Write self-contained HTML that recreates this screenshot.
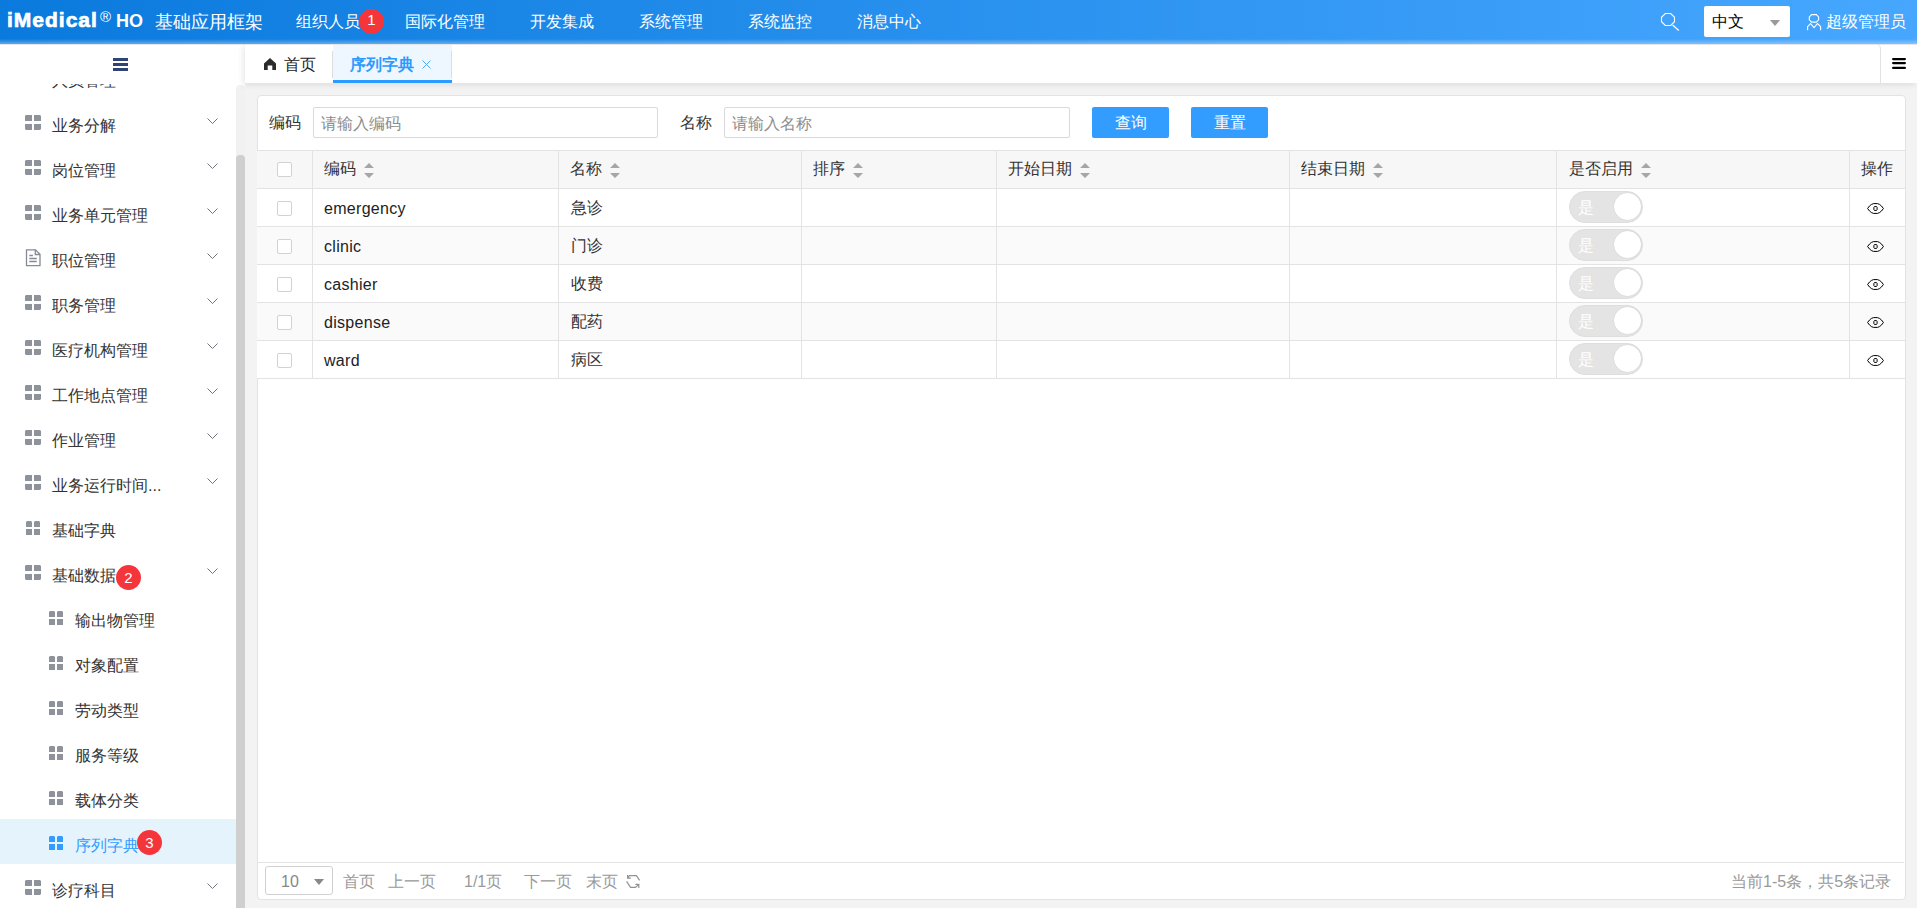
<!DOCTYPE html>
<html><head><meta charset="utf-8">
<style>
*{box-sizing:border-box}
html,body{margin:0;padding:0}
body{width:1917px;height:908px;overflow:hidden;position:relative;background:#f3f3f3;font-family:"Liberation Sans",sans-serif;color:#222}
.abs{position:absolute}
#hdr{left:0;top:0;width:1917px;height:44px;background:linear-gradient(90deg,#0a7add 0%,#47a7ff 100%);color:#fff}
#hdr .nav{position:absolute;top:12px;font-size:16px;line-height:20px;white-space:nowrap}
.badge{position:absolute;width:25px;height:25px;border-radius:50%;background:#f4363b;color:#fff;font-size:15px;line-height:25px;text-align:center}
#side{left:0;top:44px;width:245px;height:864px;background:#fff}
#menu{left:0;top:84px;width:236px;height:824px;overflow:hidden}
.mi{position:absolute;left:0;width:236px;height:45px}
.mi.sel{background:#e5f3fd}
.mi.sel .t{color:#339cff}
.mi .t{position:absolute;left:52px;top:17px;font-size:16px;line-height:20px;white-space:nowrap;color:#333}
.mi.sub .t{left:75px}
.mi svg.g{position:absolute;left:25px;top:16px}
.mi.sub svg.g{left:49px;top:17px}
.mi svg.ch{position:absolute;left:207px;top:19px}
#sb{left:236px;top:85px;width:9px;height:823px;background:#f1f1f1;border-radius:4px 4px 0 0}
#thumb{left:236px;top:155px;width:9px;height:753px;background:#cfcfcf;border-radius:4px 4px 0 0}
#tabs{left:245px;top:44px;width:1672px;height:39px;background:#fff;box-shadow:-2px 2px 6px rgba(0,0,0,.09)}
.tt{font-size:16px;line-height:20px;white-space:nowrap}
#panel{left:257px;top:95px;width:1649px;height:805px;background:#fff;border:1px solid #e3e3e3;border-radius:4px}
</style></head><body>
<div id="hdr" class="abs">
  <div class="abs" style="left:7px;top:6px;font-size:21px;font-weight:bold;line-height:28px;letter-spacing:1px;-webkit-text-stroke:0.7px #fff">iMedical</div>
  <div class="abs" style="left:100px;top:9px;font-size:15px;line-height:16px">&#174;</div>
  <div class="abs" style="left:116px;top:9px;font-size:18px;font-weight:bold;line-height:24px">HO</div>
  <div class="nav" style="left:155px;top:10px;font-size:18px;line-height:24px">基础应用框架</div>
  <div class="nav" style="left:296px">组织人员</div>
  <div class="badge" style="left:359px;top:9px;line-height:21px">1</div>
  <div class="nav" style="left:405px">国际化管理</div>
  <div class="nav" style="left:530px">开发集成</div>
  <div class="nav" style="left:639px">系统管理</div>
  <div class="nav" style="left:748px">系统监控</div>
  <div class="nav" style="left:857px">消息中心</div>
  <svg class="abs" style="left:1660px;top:12px" width="20" height="19" viewBox="0 0 20 19"><path d="M5.3 1.5H10.7L14.5 5.3V9.7L10.7 13.5H5.3L1.5 9.7V5.3z" fill="none" stroke="#fff" stroke-width="1.1"/><path d="M12.6 13L18.8 18.5" stroke="#fff" stroke-width="1.2"/></svg>
  <div class="abs" style="left:1704px;top:6px;width:86px;height:31px;background:#fff;border-radius:2px"></div>
  <div class="nav" style="left:1712px;top:12px;color:#000">中文</div>
  <svg class="abs" style="left:1770px;top:20px" width="10" height="6" viewBox="0 0 10 6"><path d="M0 0H10L5 6z" fill="#999"/></svg>
  <svg class="abs" style="left:1806px;top:14px" width="16" height="17" viewBox="0 0 16 17"><g fill="none" stroke="#fff" stroke-width="1.1"><path d="M5.6 0.6H10.3L12.6 2.9V5.8L10.3 8.1H5.6L3.3 5.8V2.9z"/><path d="M1.6 16.2V12.6L4.5 9.5L8 13.6L11.5 9.5L14.6 12.6V16.2"/></g></svg>
  <div class="nav" style="left:1826px">超级管理员</div>
</div>
<div class="abs" style="left:0;top:39px;width:1917px;height:5px;background:linear-gradient(180deg,rgba(255,255,255,0),rgba(255,255,255,.35));z-index:5"></div>
<div class="abs" style="left:0;top:44px;width:1917px;height:1px;background:rgba(0,0,0,.1);z-index:5"></div>
<div id="side" class="abs">
  <svg class="abs" style="left:113px;top:14px" width="15" height="13" viewBox="0 0 15 13"><g fill="#2f4476"><rect x="0" y="0" width="15" height="3"/><rect x="0" y="5" width="15" height="3"/><rect x="0" y="10" width="15" height="3"/></g></svg>
</div>
<div id="menu" class="abs">
<div class="mi" style="top:-30px"><div class="t">人员管理</div><svg class="ch" width="11" height="7" viewBox="0 0 11 7"><path d="M0.5 0.5L5.5 5.5L10.5 0.5" fill="none" stroke="#70747c" stroke-width="1"/></svg></div>
<div class="mi" style="top:15px"><svg class="g" width="16" height="15" viewBox="0 0 16 15"><g fill="#8e929b"><path d="M1 0h6v6H0V1z"/><path d="M9 0h6l1 1v5H9z"/><path d="M0 9h7v6H1l-1-1z"/><path d="M9 9h7v5l-1 1H9z"/></g></svg><div class="t">业务分解</div><svg class="ch" width="11" height="7" viewBox="0 0 11 7"><path d="M0.5 0.5L5.5 5.5L10.5 0.5" fill="none" stroke="#70747c" stroke-width="1"/></svg></div>
<div class="mi" style="top:60px"><svg class="g" width="16" height="15" viewBox="0 0 16 15"><g fill="#8e929b"><path d="M1 0h6v6H0V1z"/><path d="M9 0h6l1 1v5H9z"/><path d="M0 9h7v6H1l-1-1z"/><path d="M9 9h7v5l-1 1H9z"/></g></svg><div class="t">岗位管理</div><svg class="ch" width="11" height="7" viewBox="0 0 11 7"><path d="M0.5 0.5L5.5 5.5L10.5 0.5" fill="none" stroke="#70747c" stroke-width="1"/></svg></div>
<div class="mi" style="top:105px"><svg class="g" width="16" height="15" viewBox="0 0 16 15"><g fill="#8e929b"><path d="M1 0h6v6H0V1z"/><path d="M9 0h6l1 1v5H9z"/><path d="M0 9h7v6H1l-1-1z"/><path d="M9 9h7v5l-1 1H9z"/></g></svg><div class="t">业务单元管理</div><svg class="ch" width="11" height="7" viewBox="0 0 11 7"><path d="M0.5 0.5L5.5 5.5L10.5 0.5" fill="none" stroke="#70747c" stroke-width="1"/></svg></div>
<div class="mi" style="top:150px"><svg class="g" width="17" height="18" viewBox="0 0 17 18" style="top:15px"><g fill="none" stroke="#858a94" stroke-width="1.3"><path d="M1.5 0.8h9l4.5 4.5v11.4h-13.5z"/><path d="M10.3 0.8v4.7h4.7"/><path d="M4.3 6.5h3.6M4.3 9.5h7.5M4.3 12.5h7.5"/></g></svg><div class="t">职位管理</div><svg class="ch" width="11" height="7" viewBox="0 0 11 7"><path d="M0.5 0.5L5.5 5.5L10.5 0.5" fill="none" stroke="#70747c" stroke-width="1"/></svg></div>
<div class="mi" style="top:195px"><svg class="g" width="16" height="15" viewBox="0 0 16 15"><g fill="#8e929b"><path d="M1 0h6v6H0V1z"/><path d="M9 0h6l1 1v5H9z"/><path d="M0 9h7v6H1l-1-1z"/><path d="M9 9h7v5l-1 1H9z"/></g></svg><div class="t">职务管理</div><svg class="ch" width="11" height="7" viewBox="0 0 11 7"><path d="M0.5 0.5L5.5 5.5L10.5 0.5" fill="none" stroke="#70747c" stroke-width="1"/></svg></div>
<div class="mi" style="top:240px"><svg class="g" width="16" height="15" viewBox="0 0 16 15"><g fill="#8e929b"><path d="M1 0h6v6H0V1z"/><path d="M9 0h6l1 1v5H9z"/><path d="M0 9h7v6H1l-1-1z"/><path d="M9 9h7v5l-1 1H9z"/></g></svg><div class="t">医疗机构管理</div><svg class="ch" width="11" height="7" viewBox="0 0 11 7"><path d="M0.5 0.5L5.5 5.5L10.5 0.5" fill="none" stroke="#70747c" stroke-width="1"/></svg></div>
<div class="mi" style="top:285px"><svg class="g" width="16" height="15" viewBox="0 0 16 15"><g fill="#8e929b"><path d="M1 0h6v6H0V1z"/><path d="M9 0h6l1 1v5H9z"/><path d="M0 9h7v6H1l-1-1z"/><path d="M9 9h7v5l-1 1H9z"/></g></svg><div class="t">工作地点管理</div><svg class="ch" width="11" height="7" viewBox="0 0 11 7"><path d="M0.5 0.5L5.5 5.5L10.5 0.5" fill="none" stroke="#70747c" stroke-width="1"/></svg></div>
<div class="mi" style="top:330px"><svg class="g" width="16" height="15" viewBox="0 0 16 15"><g fill="#8e929b"><path d="M1 0h6v6H0V1z"/><path d="M9 0h6l1 1v5H9z"/><path d="M0 9h7v6H1l-1-1z"/><path d="M9 9h7v5l-1 1H9z"/></g></svg><div class="t">作业管理</div><svg class="ch" width="11" height="7" viewBox="0 0 11 7"><path d="M0.5 0.5L5.5 5.5L10.5 0.5" fill="none" stroke="#70747c" stroke-width="1"/></svg></div>
<div class="mi" style="top:375px"><svg class="g" width="16" height="15" viewBox="0 0 16 15"><g fill="#8e929b"><path d="M1 0h6v6H0V1z"/><path d="M9 0h6l1 1v5H9z"/><path d="M0 9h7v6H1l-1-1z"/><path d="M9 9h7v5l-1 1H9z"/></g></svg><div class="t">业务运行时间...</div><svg class="ch" width="11" height="7" viewBox="0 0 11 7"><path d="M0.5 0.5L5.5 5.5L10.5 0.5" fill="none" stroke="#70747c" stroke-width="1"/></svg></div>
<div class="mi" style="top:420px"><svg class="g" style="left:26px;top:17px" width="14" height="14" viewBox="0 0 14 14"><g fill="#8e929b"><path d="M1 0h4l1 1v5H0V1z"/><path d="M9 0h4l1 1v5H8V1z"/><path d="M0 8h6v6H0z"/><path d="M8 8h6v6H8z"/></g></svg><div class="t">基础字典</div></div>
<div class="mi" style="top:465px"><svg class="g" width="16" height="15" viewBox="0 0 16 15"><g fill="#8e929b"><path d="M1 0h6v6H0V1z"/><path d="M9 0h6l1 1v5H9z"/><path d="M0 9h7v6H1l-1-1z"/><path d="M9 9h7v5l-1 1H9z"/></g></svg><div class="t">基础数据</div><svg class="ch" width="11" height="7" viewBox="0 0 11 7"><path d="M0.5 0.5L5.5 5.5L10.5 0.5" fill="none" stroke="#70747c" stroke-width="1"/></svg><div class="badge" style="left:116px;top:16px">2</div></div>
<div class="mi sub" style="top:510px"><svg class="g" width="14" height="14" viewBox="0 0 14 14"><g fill="#8e929b"><path d="M1 0h4l1 1v5H0V1z"/><path d="M9 0h4l1 1v5H8V1z"/><path d="M0 8h6v6H0z"/><path d="M8 8h6v6H8z"/></g></svg><div class="t">输出物管理</div></div>
<div class="mi sub" style="top:555px"><svg class="g" width="14" height="14" viewBox="0 0 14 14"><g fill="#8e929b"><path d="M1 0h4l1 1v5H0V1z"/><path d="M9 0h4l1 1v5H8V1z"/><path d="M0 8h6v6H0z"/><path d="M8 8h6v6H8z"/></g></svg><div class="t">对象配置</div></div>
<div class="mi sub" style="top:600px"><svg class="g" width="14" height="14" viewBox="0 0 14 14"><g fill="#8e929b"><path d="M1 0h4l1 1v5H0V1z"/><path d="M9 0h4l1 1v5H8V1z"/><path d="M0 8h6v6H0z"/><path d="M8 8h6v6H8z"/></g></svg><div class="t">劳动类型</div></div>
<div class="mi sub" style="top:645px"><svg class="g" width="14" height="14" viewBox="0 0 14 14"><g fill="#8e929b"><path d="M1 0h4l1 1v5H0V1z"/><path d="M9 0h4l1 1v5H8V1z"/><path d="M0 8h6v6H0z"/><path d="M8 8h6v6H8z"/></g></svg><div class="t">服务等级</div></div>
<div class="mi sub" style="top:690px"><svg class="g" width="14" height="14" viewBox="0 0 14 14"><g fill="#8e929b"><path d="M1 0h4l1 1v5H0V1z"/><path d="M9 0h4l1 1v5H8V1z"/><path d="M0 8h6v6H0z"/><path d="M8 8h6v6H8z"/></g></svg><div class="t">载体分类</div></div>
<div class="mi sub sel" style="top:735px"><svg class="g" width="14" height="14" viewBox="0 0 14 14"><g fill="#339cff"><path d="M1 0h4l1 1v5H0V1z"/><path d="M9 0h4l1 1v5H8V1z"/><path d="M0 8h6v6H0z"/><path d="M8 8h6v6H8z"/></g></svg><div class="t">序列字典</div><div class="badge" style="left:137px;top:11px">3</div></div>
<div class="mi" style="top:780px"><svg class="g" width="16" height="15" viewBox="0 0 16 15"><g fill="#8e929b"><path d="M1 0h6v6H0V1z"/><path d="M9 0h6l1 1v5H9z"/><path d="M0 9h7v6H1l-1-1z"/><path d="M9 9h7v5l-1 1H9z"/></g></svg><div class="t">诊疗科目</div><svg class="ch" width="11" height="7" viewBox="0 0 11 7"><path d="M0.5 0.5L5.5 5.5L10.5 0.5" fill="none" stroke="#70747c" stroke-width="1"/></svg></div>
</div>
<div id="sb" class="abs"></div>
<div id="thumb" class="abs"></div>
<div id="tabs" class="abs">
  <div class="abs" style="left:0;top:0;width:1636px;height:39px;border-right:1px solid #e2e2e2;border-radius:0 5px 0 0"></div>
  <svg class="abs" style="left:19px;top:14px" width="12" height="12" viewBox="0 0 12 12"><path d="M6 0L12 5.6V12H8.3V7.4H3.7V12H0V5.6z" fill="#2b2b2b"/></svg>
  <div class="abs tt" style="left:39px;top:11px;color:#222">首页</div>
  <div class="abs" style="left:88px;top:1px;width:119px;height:38px;background:#eef7ff;border-bottom:3px solid #2b9bff"></div>
  <div class="abs" style="left:87px;top:7px;width:1px;height:27px;background:#ddd"></div>
  <div class="abs" style="left:206px;top:7px;width:1px;height:27px;background:#ddd"></div>
  <div class="abs tt" style="left:105px;top:11px;color:#2b9bff;font-weight:bold">序列字典</div>
  <svg class="abs" style="left:177px;top:16px" width="9" height="9" viewBox="0 0 9 9"><path d="M0.5 0.5L8.5 8.5M8.5 0.5L0.5 8.5" stroke="#4aa8f8" stroke-width="1"/></svg>
  <svg class="abs" style="left:1647px;top:14px" width="14" height="11" viewBox="0 0 14 11"><g stroke="#000" stroke-width="2.2" stroke-linecap="round"><path d="M1.1 1.1H12.9M1.1 5.1H12.9M1.1 9.9H12.9"/></g></svg>
</div>
<div id="panel" class="abs">

</div>
<div id="pc">
<div class="abs" style="left:269px;top:113px;font-size:16px;line-height:20px;color:#333">编码</div>
<div class="abs" style="left:313px;top:107px;width:345px;height:31px;border:1px solid #d9d9d9;border-radius:2px;font-size:16px;line-height:31px;padding-left:7px;color:#8c8c8c">请输入编码</div>
<div class="abs" style="left:680px;top:113px;font-size:16px;line-height:20px;color:#333">名称</div>
<div class="abs" style="left:724px;top:107px;width:346px;height:31px;border:1px solid #d9d9d9;border-radius:2px;font-size:16px;line-height:31px;padding-left:7px;color:#8c8c8c">请输入名称</div>
<div class="abs" style="left:1092px;top:107px;width:77px;height:31px;background:#339cff;border-radius:2px;font-size:16px;line-height:31px;text-align:center;color:#fff">查询</div>
<div class="abs" style="left:1191px;top:107px;width:77px;height:31px;background:#339cff;border-radius:2px;font-size:16px;line-height:31px;text-align:center;color:#fff">重置</div>
<div class="abs" style="left:257px;top:150px;width:1648px;height:38px;background:#f7f7f7"></div>
<div class="abs" style="left:257px;top:188px;width:1648px;height:38px;background:#fff"></div>
<div class="abs" style="left:257px;top:226px;width:1648px;height:38px;background:#fafafa"></div>
<div class="abs" style="left:257px;top:264px;width:1648px;height:38px;background:#fff"></div>
<div class="abs" style="left:257px;top:302px;width:1648px;height:38px;background:#fafafa"></div>
<div class="abs" style="left:257px;top:340px;width:1648px;height:38px;background:#fff"></div>
<div class="abs" style="left:257px;top:150px;width:1648px;height:1px;background:#e3e3e3"></div>
<div class="abs" style="left:257px;top:188px;width:1648px;height:1px;background:#e3e3e3"></div>
<div class="abs" style="left:257px;top:226px;width:1648px;height:1px;background:#e3e3e3"></div>
<div class="abs" style="left:257px;top:264px;width:1648px;height:1px;background:#e3e3e3"></div>
<div class="abs" style="left:257px;top:302px;width:1648px;height:1px;background:#e3e3e3"></div>
<div class="abs" style="left:257px;top:340px;width:1648px;height:1px;background:#e3e3e3"></div>
<div class="abs" style="left:257px;top:378px;width:1648px;height:1px;background:#e3e3e3"></div>
<div class="abs" style="left:312px;top:150px;width:1px;height:229px;background:#e3e3e3"></div>
<div class="abs" style="left:558px;top:150px;width:1px;height:229px;background:#e3e3e3"></div>
<div class="abs" style="left:801px;top:150px;width:1px;height:229px;background:#e3e3e3"></div>
<div class="abs" style="left:996px;top:150px;width:1px;height:229px;background:#e3e3e3"></div>
<div class="abs" style="left:1289px;top:150px;width:1px;height:229px;background:#e3e3e3"></div>
<div class="abs" style="left:1556px;top:150px;width:1px;height:229px;background:#e3e3e3"></div>
<div class="abs" style="left:1849px;top:150px;width:1px;height:229px;background:#e3e3e3"></div>
<div class="abs" style="left:324px;top:159px;font-size:16px;line-height:20px;color:#333;white-space:nowrap">编码</div>
<div class="abs" style="left:364px;top:163px;width:10px;height:15px;line-height:0"><svg width="10" height="15" viewBox="0 0 10 15"><path d="M5 0L10 5H0z M0 10H10L5 15z" fill="#a6a6a6"/></svg></div>
<div class="abs" style="left:570px;top:159px;font-size:16px;line-height:20px;color:#333;white-space:nowrap">名称</div>
<div class="abs" style="left:610px;top:163px;width:10px;height:15px;line-height:0"><svg width="10" height="15" viewBox="0 0 10 15"><path d="M5 0L10 5H0z M0 10H10L5 15z" fill="#a6a6a6"/></svg></div>
<div class="abs" style="left:813px;top:159px;font-size:16px;line-height:20px;color:#333;white-space:nowrap">排序</div>
<div class="abs" style="left:853px;top:163px;width:10px;height:15px;line-height:0"><svg width="10" height="15" viewBox="0 0 10 15"><path d="M5 0L10 5H0z M0 10H10L5 15z" fill="#a6a6a6"/></svg></div>
<div class="abs" style="left:1008px;top:159px;font-size:16px;line-height:20px;color:#333;white-space:nowrap">开始日期</div>
<div class="abs" style="left:1080px;top:163px;width:10px;height:15px;line-height:0"><svg width="10" height="15" viewBox="0 0 10 15"><path d="M5 0L10 5H0z M0 10H10L5 15z" fill="#a6a6a6"/></svg></div>
<div class="abs" style="left:1301px;top:159px;font-size:16px;line-height:20px;color:#333;white-space:nowrap">结束日期</div>
<div class="abs" style="left:1373px;top:163px;width:10px;height:15px;line-height:0"><svg width="10" height="15" viewBox="0 0 10 15"><path d="M5 0L10 5H0z M0 10H10L5 15z" fill="#a6a6a6"/></svg></div>
<div class="abs" style="left:1569px;top:159px;font-size:16px;line-height:20px;color:#333;white-space:nowrap">是否启用</div>
<div class="abs" style="left:1641px;top:163px;width:10px;height:15px;line-height:0"><svg width="10" height="15" viewBox="0 0 10 15"><path d="M5 0L10 5H0z M0 10H10L5 15z" fill="#a6a6a6"/></svg></div>
<div class="abs" style="left:1861px;top:159px;font-size:16px;line-height:20px;color:#333;white-space:nowrap">操作</div>
<div class="abs" style="left:277px;top:162px;width:15px;height:15px;border:1px solid #d2d2d2;border-radius:2px;background:#fff"></div>
<div class="abs" style="left:277px;top:201px;width:15px;height:15px;border:1px solid #d2d2d2;border-radius:2px;background:#fff"></div>
<div class="abs" style="left:324px;top:199px;font-size:16px;line-height:20px;color:#222;letter-spacing:0.3px">emergency</div>
<div class="abs" style="left:571px;top:198px;font-size:16px;line-height:20px;color:#333">急诊</div>
<div class="abs" style="left:1569px;top:191px;width:74px;height:32px;border-radius:16px;background:#e4e4e4;border:1px solid #dedede"><span style="position:absolute;left:8px;top:6px;font-size:16px;line-height:20px;color:#fff">是</span><span style="position:absolute;right:1px;top:1px;width:27px;height:27px;border-radius:50%;background:#fff;box-shadow:0 0 1px rgba(0,0,0,.2)"></span></div>
<div class="abs" style="left:1867px;top:203px;width:17px;height:11px;line-height:0"><svg width="17" height="11" viewBox="0 0 17 11"><path d="M0.6 5.5L2.5 3L4.5 1.4L6.5 0.6H10.5L12.5 1.4L14.5 3L16.4 5.5L14.5 8L12.5 9.6L10.5 10.4H6.5L4.5 9.6L2.5 8z" fill="none" stroke="#000" stroke-width="1"/><path d="M7.4 3.6H9.6L10.1 4.4V6.6L9.6 7.4H7.4L6.9 6.6V4.4z" fill="none" stroke="#000" stroke-width="1"/></svg></div>
<div class="abs" style="left:277px;top:239px;width:15px;height:15px;border:1px solid #d2d2d2;border-radius:2px;background:#fff"></div>
<div class="abs" style="left:324px;top:237px;font-size:16px;line-height:20px;color:#222;letter-spacing:0.3px">clinic</div>
<div class="abs" style="left:571px;top:236px;font-size:16px;line-height:20px;color:#333">门诊</div>
<div class="abs" style="left:1569px;top:229px;width:74px;height:32px;border-radius:16px;background:#e4e4e4;border:1px solid #dedede"><span style="position:absolute;left:8px;top:6px;font-size:16px;line-height:20px;color:#fff">是</span><span style="position:absolute;right:1px;top:1px;width:27px;height:27px;border-radius:50%;background:#fff;box-shadow:0 0 1px rgba(0,0,0,.2)"></span></div>
<div class="abs" style="left:1867px;top:241px;width:17px;height:11px;line-height:0"><svg width="17" height="11" viewBox="0 0 17 11"><path d="M0.6 5.5L2.5 3L4.5 1.4L6.5 0.6H10.5L12.5 1.4L14.5 3L16.4 5.5L14.5 8L12.5 9.6L10.5 10.4H6.5L4.5 9.6L2.5 8z" fill="none" stroke="#000" stroke-width="1"/><path d="M7.4 3.6H9.6L10.1 4.4V6.6L9.6 7.4H7.4L6.9 6.6V4.4z" fill="none" stroke="#000" stroke-width="1"/></svg></div>
<div class="abs" style="left:277px;top:277px;width:15px;height:15px;border:1px solid #d2d2d2;border-radius:2px;background:#fff"></div>
<div class="abs" style="left:324px;top:275px;font-size:16px;line-height:20px;color:#222;letter-spacing:0.3px">cashier</div>
<div class="abs" style="left:571px;top:274px;font-size:16px;line-height:20px;color:#333">收费</div>
<div class="abs" style="left:1569px;top:267px;width:74px;height:32px;border-radius:16px;background:#e4e4e4;border:1px solid #dedede"><span style="position:absolute;left:8px;top:6px;font-size:16px;line-height:20px;color:#fff">是</span><span style="position:absolute;right:1px;top:1px;width:27px;height:27px;border-radius:50%;background:#fff;box-shadow:0 0 1px rgba(0,0,0,.2)"></span></div>
<div class="abs" style="left:1867px;top:279px;width:17px;height:11px;line-height:0"><svg width="17" height="11" viewBox="0 0 17 11"><path d="M0.6 5.5L2.5 3L4.5 1.4L6.5 0.6H10.5L12.5 1.4L14.5 3L16.4 5.5L14.5 8L12.5 9.6L10.5 10.4H6.5L4.5 9.6L2.5 8z" fill="none" stroke="#000" stroke-width="1"/><path d="M7.4 3.6H9.6L10.1 4.4V6.6L9.6 7.4H7.4L6.9 6.6V4.4z" fill="none" stroke="#000" stroke-width="1"/></svg></div>
<div class="abs" style="left:277px;top:315px;width:15px;height:15px;border:1px solid #d2d2d2;border-radius:2px;background:#fff"></div>
<div class="abs" style="left:324px;top:313px;font-size:16px;line-height:20px;color:#222;letter-spacing:0.3px">dispense</div>
<div class="abs" style="left:571px;top:312px;font-size:16px;line-height:20px;color:#333">配药</div>
<div class="abs" style="left:1569px;top:305px;width:74px;height:32px;border-radius:16px;background:#e4e4e4;border:1px solid #dedede"><span style="position:absolute;left:8px;top:6px;font-size:16px;line-height:20px;color:#fff">是</span><span style="position:absolute;right:1px;top:1px;width:27px;height:27px;border-radius:50%;background:#fff;box-shadow:0 0 1px rgba(0,0,0,.2)"></span></div>
<div class="abs" style="left:1867px;top:317px;width:17px;height:11px;line-height:0"><svg width="17" height="11" viewBox="0 0 17 11"><path d="M0.6 5.5L2.5 3L4.5 1.4L6.5 0.6H10.5L12.5 1.4L14.5 3L16.4 5.5L14.5 8L12.5 9.6L10.5 10.4H6.5L4.5 9.6L2.5 8z" fill="none" stroke="#000" stroke-width="1"/><path d="M7.4 3.6H9.6L10.1 4.4V6.6L9.6 7.4H7.4L6.9 6.6V4.4z" fill="none" stroke="#000" stroke-width="1"/></svg></div>
<div class="abs" style="left:277px;top:353px;width:15px;height:15px;border:1px solid #d2d2d2;border-radius:2px;background:#fff"></div>
<div class="abs" style="left:324px;top:351px;font-size:16px;line-height:20px;color:#222;letter-spacing:0.3px">ward</div>
<div class="abs" style="left:571px;top:350px;font-size:16px;line-height:20px;color:#333">病区</div>
<div class="abs" style="left:1569px;top:343px;width:74px;height:32px;border-radius:16px;background:#e4e4e4;border:1px solid #dedede"><span style="position:absolute;left:8px;top:6px;font-size:16px;line-height:20px;color:#fff">是</span><span style="position:absolute;right:1px;top:1px;width:27px;height:27px;border-radius:50%;background:#fff;box-shadow:0 0 1px rgba(0,0,0,.2)"></span></div>
<div class="abs" style="left:1867px;top:355px;width:17px;height:11px;line-height:0"><svg width="17" height="11" viewBox="0 0 17 11"><path d="M0.6 5.5L2.5 3L4.5 1.4L6.5 0.6H10.5L12.5 1.4L14.5 3L16.4 5.5L14.5 8L12.5 9.6L10.5 10.4H6.5L4.5 9.6L2.5 8z" fill="none" stroke="#000" stroke-width="1"/><path d="M7.4 3.6H9.6L10.1 4.4V6.6L9.6 7.4H7.4L6.9 6.6V4.4z" fill="none" stroke="#000" stroke-width="1"/></svg></div>
<div class="abs" style="left:258px;top:862px;width:1646px;height:1px;background:#e3e3e3"></div>
<div class="abs" style="left:265px;top:866px;width:68px;height:29px;border:1px solid #d0d0d0;border-radius:3px;font-size:16px;line-height:20px;color:#888"><span style="position:absolute;left:15px;top:5px">10</span><svg style="position:absolute;left:48px;top:12px" width="10" height="6" viewBox="0 0 10 6"><path d="M0 0H10L5 6z" fill="#888"/></svg></div>
<div class="abs" style="left:343px;top:872px;font-size:16px;line-height:20px;color:#999;white-space:nowrap">首页</div>
<div class="abs" style="left:388px;top:872px;font-size:16px;line-height:20px;color:#999;white-space:nowrap">上一页</div>
<div class="abs" style="left:464px;top:872px;font-size:16px;line-height:20px;color:#999;white-space:nowrap">1/1页</div>
<div class="abs" style="left:524px;top:872px;font-size:16px;line-height:20px;color:#999;white-space:nowrap">下一页</div>
<div class="abs" style="left:586px;top:872px;font-size:16px;line-height:20px;color:#999;white-space:nowrap">末页</div>
<div class="abs" style="left:626px;top:874px;line-height:0"><svg width="15" height="15" viewBox="0 0 15 15"><g fill="none" stroke="#939393" stroke-width="1.2"><path d="M13.6 6.4L10.4 1.6H3.4L1.6 4.1M1.6 0.9V4.1H4.9M0.6 7.4L4.5 13.4H9.5L12.8 10.4M9.4 10.4H12.8V13.9"/></g></svg></div>
<div class="abs" style="left:1731px;top:872px;font-size:16px;line-height:20px;color:#999;white-space:nowrap">当前1-5条，共5条记录</div>
</div>
</body></html>
